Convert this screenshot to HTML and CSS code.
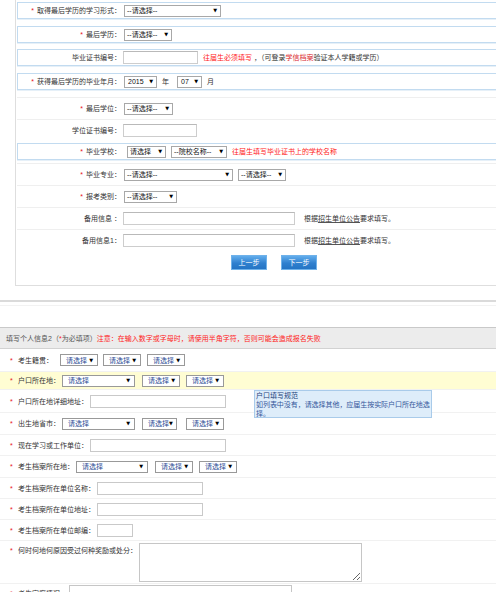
FILE: index.html
```html
<!DOCTYPE html>
<html lang="zh-CN">
<head>
<meta charset="utf-8">
<title>报名信息</title>
<link rel="stylesheet" href="styles.css">
</head>
<body>
<div class="panel">
  <div class="box">
    <div class="lab"><span class="star">*</span>取得最后学历的学习形式：</div>
    <span class="sel w97">--请选择--</span>
  </div>
  <div class="box b6">
    <div class="lab"><span class="star">*</span>最后学历：</div>
    <span class="sel w48">--请选择--</span>
  </div>
  <div class="box">
    <div class="lab">毕业证书编号：</div>
    <span class="inp w75"></span>
    <span class="note"><span class="red">往届生必须填写</span> ，（可登录<span class="red2">学信档案</span>验证本人学籍或学历）</span>
  </div>
  <div class="box">
    <div class="lab"><span class="star">*</span>获得最后学历的毕业年月：</div>
    <span class="sel w33 num">2015</span><span class="unit">年</span><span class="sel w25 num">07</span><span class="unit">月</span>
  </div>
  <div class="line">
    <div class="lab"><span class="star">*</span>最后学位：</div>
    <span class="sel w49">--请选择--</span>
  </div>
  <div class="line">
    <div class="lab">学位证书编号：</div>
    <span class="inp w74"></span>
  </div>
  <div class="box school">
    <div class="lab"><span class="star">*</span>毕业学校：</div>
    <span class="sel w39 first">请选择</span><span class="sel w56 next">--院校名称--</span>
    <span class="note red">往届生填写毕业证书上的学校名称</span>
  </div>
  <div class="line">
    <div class="lab"><span class="star">*</span>毕业专业：</div>
    <span class="sel w109">--请选择--</span><span class="sel w48 next">--请选择--</span>
  </div>
  <div class="line">
    <div class="lab"><span class="star">*</span>报考类别：</div>
    <span class="sel w53">--请选择--</span>
  </div>
  <div class="line">
    <div class="lab">备用信息 ：</div>
    <span class="inp w172"></span>
    <span class="hint">根据<u>招生单位公告</u>要求填写。</span>
  </div>
  <div class="line">
    <div class="lab">备用信息1：</div>
    <span class="inp w172"></span>
    <span class="hint">根据<u>招生单位公告</u>要求填写。</span>
  </div>
  <div class="btns">
    <span class="btn">上一步</span>
    <span class="btn">下一步</span>
  </div>
</div>

<div class="sep1"></div>
<div class="sep2"></div>

<div class="hdr">
  <span>填写个人信息2（</span><span class="red">*</span><span>为必填项）</span><span class="red">注意：在输入数字或字母时，请使用半角字符，否则可能会造成报名失败</span>
</div>

<div class="brow r1">
  <span class="bstar">*</span><span class="blab">考生籍贯：</span>
  <span class="bsel w38 m7">请选择</span><span class="bsel w38 m5">请选择</span><span class="bsel w38 m6">请选择</span>
</div>
<div class="brow yellow">
  <span class="bstar">*</span><span class="blab">户口所在地：</span>
  <span class="bsel w73">请选择</span><span class="bsel w38 m7">请选择</span><span class="bsel w38 m6">请选择</span>
  <div class="tip">
    <div class="tip-title">户口填写规范</div>
    <div class="tip-body">如列表中没有，请选择其他，应届生按实际户口所在地选<br>择。</div>
  </div>
</div>
<div class="brow r3">
  <span class="bstar">*</span><span class="blab">户口所在地详细地址：</span>
  <span class="binp w136"></span>
</div>
<div class="brow r22">
  <span class="bstar">*</span><span class="blab">出生地省市：</span>
  <span class="bsel w73">请选择</span><span class="bsel w35 m7">请选择</span><span class="bsel w38 m9">请选择</span>
</div>
<div class="brow">
  <span class="bstar">*</span><span class="blab">现在学习或工作单位：</span>
  <span class="binp w136"></span>
</div>
<div class="brow r22">
  <span class="bstar">*</span><span class="blab">考生档案所在地：</span>
  <span class="bsel w72">请选择</span><span class="bsel w38 m7">请选择</span><span class="bsel w38 m6">请选择</span>
</div>
<div class="brow">
  <span class="bstar">*</span><span class="blab">考生档案所在单位名称：</span>
  <span class="binp w106"></span>
</div>
<div class="brow">
  <span class="bstar">*</span><span class="blab">考生档案所在单位地址：</span>
  <span class="binp w106"></span>
</div>
<div class="brow">
  <span class="bstar">*</span><span class="blab">考生档案所在单位邮编：</span>
  <span class="binp w36"></span>
</div>
<div class="brow tall">
  <span class="bstar">*</span><span class="blab">何时何地何原因受过何种奖励或处分：</span>
  <textarea class="area"></textarea>
</div>
<div class="brow tall last">
  <span class="bstar">*</span><span class="blab">考生家庭情况：</span>
  <textarea class="area"></textarea>
</div>
</body>
</html>
```

FILE: styles.css
```css
* { box-sizing: border-box; }
html, body { margin: 0; padding: 0; }
body {
  width: 496px;
  height: 592px;
  overflow: hidden;
  background: #fff;
  font-family: "Liberation Sans", "Noto Sans CJK SC", sans-serif;
  font-size: 7px;
  line-height: 9px;
  color: #333;
}

/* ---------- top panel ---------- */
.panel {
  margin-left: 15px;
  width: 481px;
  border-left: 1px solid #dedede;
  border-bottom: 1px solid #dedede;
  padding: 2px 0 15px 1px;
}
.box {
  display: flex;
  align-items: center;
  height: 17px;
  border: 1px solid #c2dbf0;
  border-right: 0;
  box-shadow: 0 1px 0 #e6f0f8;
  margin-bottom: 7px;
}
.box.b6 { margin-bottom: 6px; }
.box.school { margin: 2px 0 3px; }
.line {
  display: flex;
  align-items: center;
  height: 22px;
  border-top: 1px solid #efefef;
  padding-left: 1px;
}
.lab {
  flex: none;
  width: 103px;
  text-align: right;
  white-space: nowrap;
}
.star { color: #e8141b; margin-right: 3px; }
.red { color: #f22; }
.red2 { color: #d9252b; }

.sel {
  flex: none;
  display: inline-flex;
  align-items: center;
  justify-content: space-between;
  height: 12px;
  margin-left: 3px;
  padding: 0 3px 0 2px;
  border: 1px solid #a8a8a8;
  background: #fff;
  color: #111;
  white-space: nowrap;
}
.sel::after {
  content: "▼";
  font-family: "DejaVu Sans", sans-serif;
  font-size: 5px;
  color: #000;
}
.sel.num { padding-left: 3px; }
.sel.first { margin-left: 6px; }
.sel.next { margin-left: 5px; }
.unit { margin: 0 5px 0 5px; }

.w25 { width: 25px; }
.w33 { width: 33px; }
.w39 { width: 39px; }
.w48 { width: 48px; }
.w49 { width: 49px; }
.w53 { width: 53px; }
.w56 { width: 56px; }
.w97 { width: 97px; }
.w109 { width: 109px; }

.inp {
  flex: none;
  display: inline-block;
  height: 13px;
  margin-left: 2px;
  border: 1px solid #cdcdcd;
  border-top-color: #b9b9b9;
  background: #fff;
}
.w74 { width: 74px; }
.w75 { width: 75px; }
.w172 { width: 172px; }

.note { margin-left: 5px; white-space: nowrap; }
.hint { margin-left: 9px; white-space: nowrap; color: #333; }
.hint u { text-decoration-color: #555; }

.btns {
  display: flex;
  gap: 14px;
  margin: 4px 0 0 214px;
}
.btn {
  width: 36px;
  height: 15px;
  display: flex;
  align-items: center;
  justify-content: center;
  color: #fff;
  border: 1px solid #6fb2ea;
  background: linear-gradient(#62adec, #2f80cf 55%, #2474c4);
}

/* ---------- dividers ---------- */
.sep1 { margin-top: 14px; height: 2px; background: #dadada; }
.sep2 { margin-top: 3px; height: 1px; background: #f2f2f2; }

/* ---------- bottom form ---------- */
.hdr {
  margin-top: 21px;
  height: 22px;
  display: flex;
  align-items: center;
  padding-left: 6px;
  background: #ececec;
  border-top: 1px solid #c9c9c9;
  border-bottom: 1px solid #d2d2d2;
  color: #555;
  white-space: nowrap;
}

.brow {
  position: relative;
  display: flex;
  align-items: center;
  height: 21px;
  padding-left: 10px;
  border-top: 1px solid #f1f1f1;
  white-space: nowrap;
}
.brow.r1 { height: 22px; border-top: 0; }
.brow.yellow { height: 18px; background: #fffdd3; }
.brow.r3 { height: 23px; }
.brow.r22 { height: 22px; }
.brow.tall { height: 43px; align-items: flex-start; }
.brow.tall .blab,
.brow.tall .bstar { padding-top: 5px; }
.brow.last { height: 20px; }
.bstar { width: 8px; color: #e8141b; }
.blab { color: #333; }

.bsel {
  flex: none;
  display: inline-flex;
  align-items: center;
  justify-content: space-between;
  height: 12px;
  margin-left: 2px;
  padding: 0 4px 0 5px;
  border: 1px solid #999;
  background: #fff;
  color: #2a4a94;
}
.bsel::after {
  content: "▼";
  font-family: "DejaVu Sans", sans-serif;
  font-size: 5px;
  color: #000;
}
.m5 { margin-left: 5px; }
.m6 { margin-left: 6px; }
.m7 { margin-left: 7px; }
.m9 { margin-left: 9px; }
.w35 { width: 35px; }
.w38 { width: 38px; }
.w72 { width: 72px; }
.w73 { width: 73px; }

.binp {
  flex: none;
  display: inline-block;
  height: 13px;
  margin-left: 2px;
  border: 1px solid #c9c9c9;
  background: #fff;
}
.w36 { width: 36px; }
.w106 { width: 106px; }
.w136 { width: 136px; }

.area {
  flex: none;
  width: 223px;
  height: 39px;
  margin: 2px 0 0 2px;
  border: 1px solid #c6c6c6;
  padding: 0;
  background: #fff;
}
.brow.last .area { margin-top: 1px; }

.tip {
  position: absolute;
  left: 254px;
  top: 18px;
  width: 178px;
  height: 28px;
  padding: 0 1px;
  background: #deedfa;
  border: 1px solid #a9cbea;
  z-index: 2;
}
.tip-title { color: #22427a; }
.tip-body { color: #35579a; white-space: nowrap; letter-spacing: -0.05px; }
```
